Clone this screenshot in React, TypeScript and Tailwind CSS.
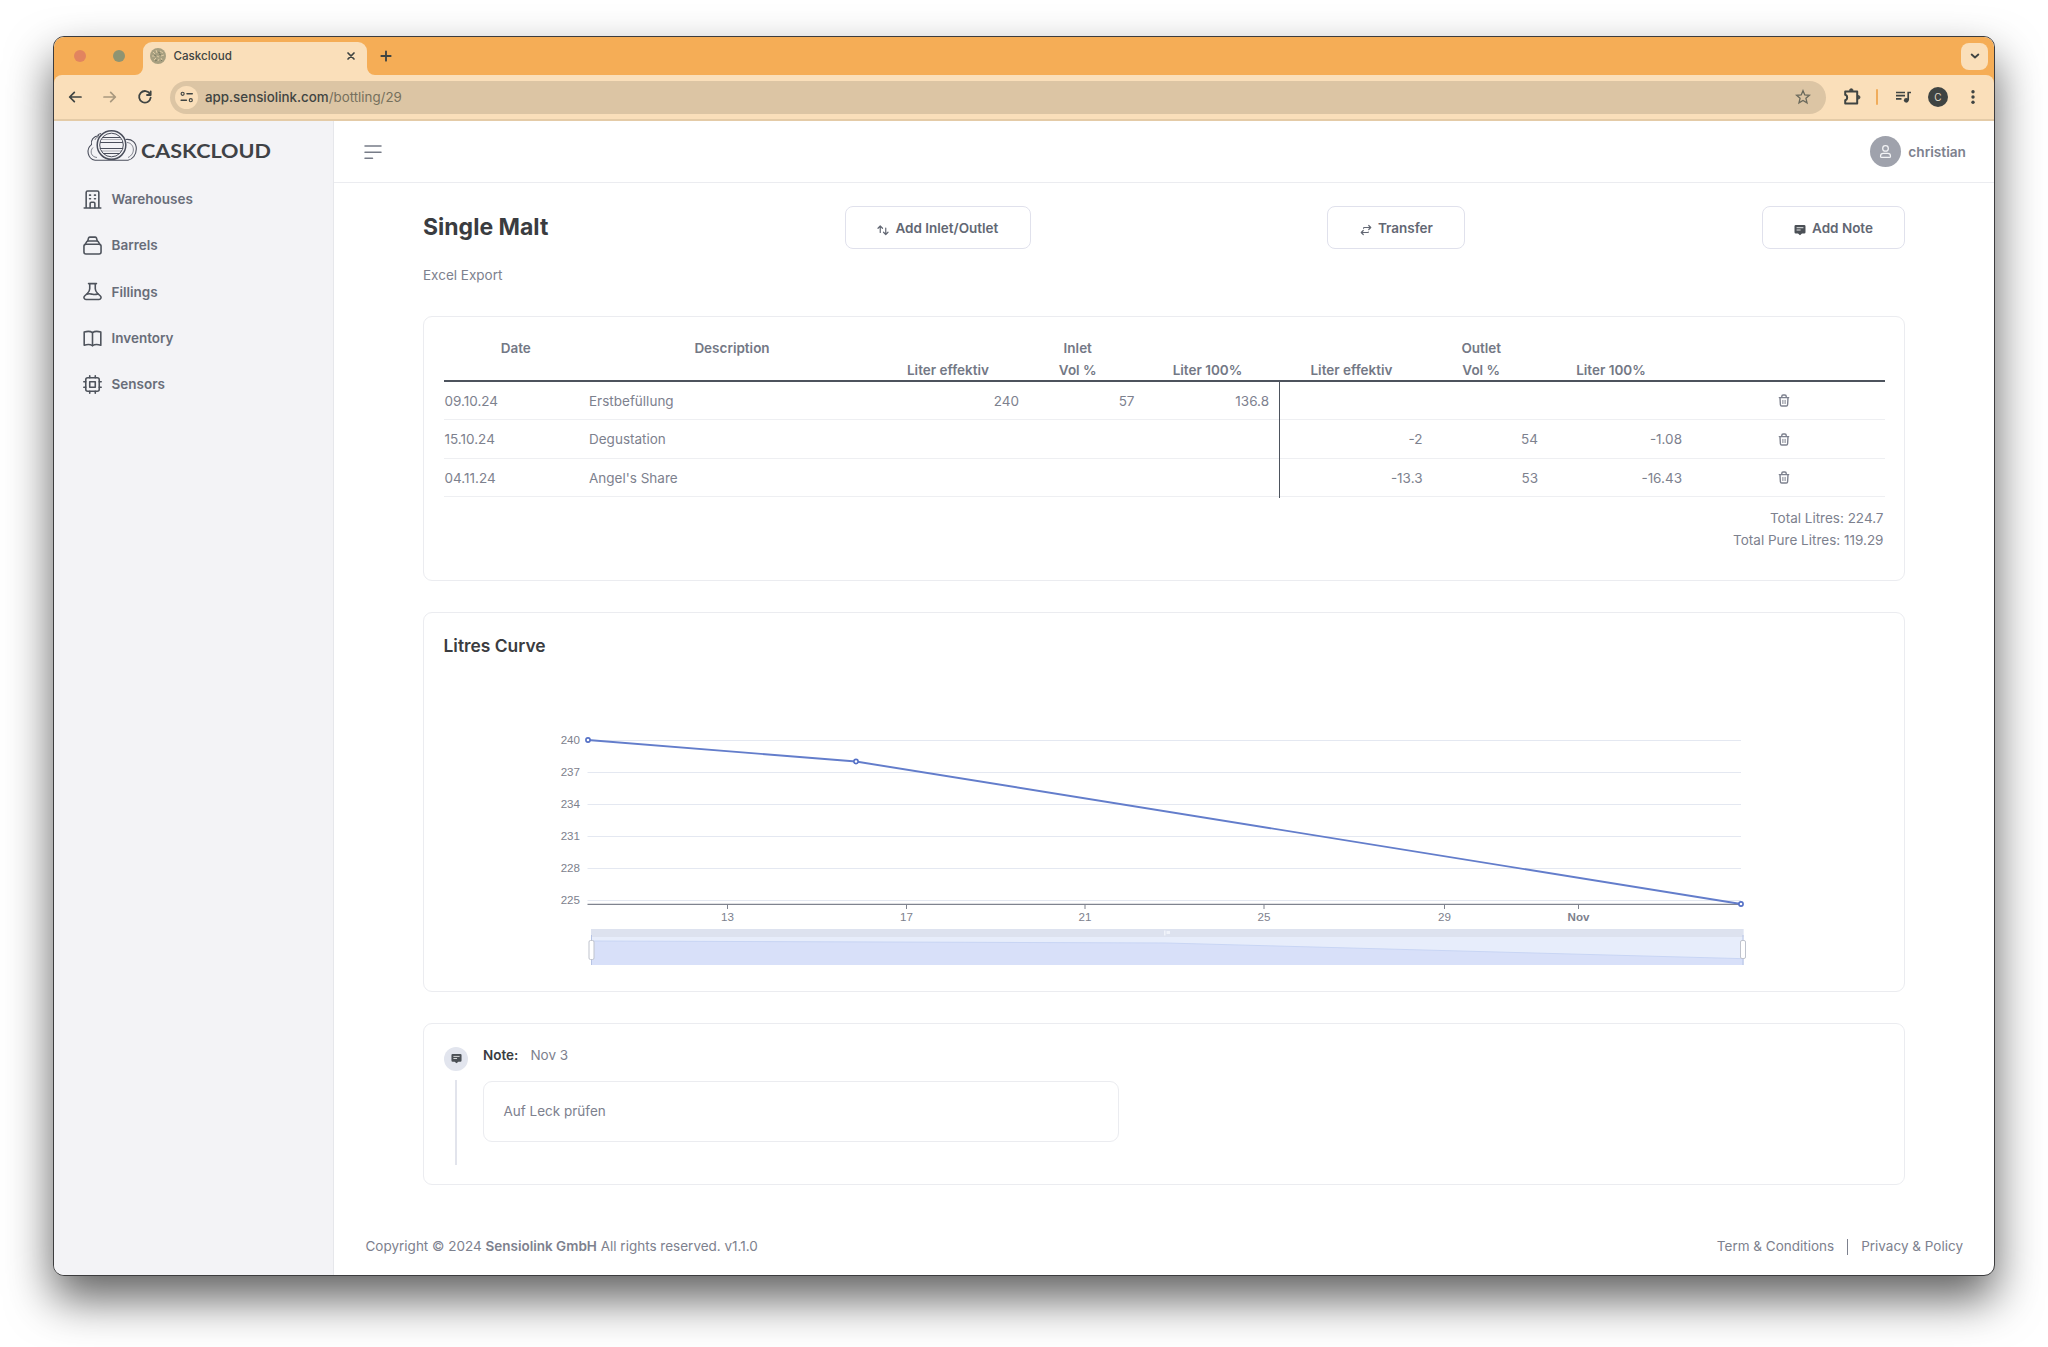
import type { ReactNode } from "react";
import clsx from "clsx";

type IconProps = { className?: string; children?: ReactNode };

function Icon({ className, children }: IconProps) {
    return (
        <svg
            viewBox="0 0 24 24"
            fill="none"
            stroke="currentColor"
            strokeWidth="2"
            strokeLinecap="round"
            strokeLinejoin="round"
            className={className}
        >
            {children}
        </svg>
    );
}

const navItems = [
    {
        label: "Warehouses",
        icon: (
            <>
                <path d="M4 22.5V3a1.8 1.8 0 0 1 1.8-1.8h12.4A1.8 1.8 0 0 1 20 3v19.5M1.5 22.7h21" />
                <path d="M9 22.5V17a1.5 1.5 0 0 1 1.5-1.5h3A1.5 1.5 0 0 1 15 17v5.5" />
                <path d="M8.3 6.5h1.2M14.5 6.5h1.2M8.3 11h1.2M14.5 11h1.2" />
            </>
        ),
    },
    {
        label: "Barrels",
        icon: (
            <>
                <rect x="1.2" y="10.5" width="21.6" height="12.3" rx="2.5" />
                <path d="M2.5 11l2.3-3.8a1.8 1.8 0 0 1 1.6-.9h11.2a1.8 1.8 0 0 1 1.6.9l2.3 3.8" />
                <path d="M6 6.2l1-3.6A1.6 1.6 0 0 1 8.500 1.400h7A1.6 1.6 0 0 1 17 2.600l1 3.600" />
            </>
        ),
    },
    {
        label: "Fillings",
        icon: (
            <>
                <path d="M7 2h10M8.5 2v6.5c0 2.5-1.5 4.5-3 6L2 17.7A2.5 2.5 0 0 0 3.8 22h16.4a2.5 2.5 0 0 0 1.8-4.3l-3.5-3.2c-1.5-1.5-3-3.5-3-6V2" />
                <path d="M4.5 15.5c3-1.200 5-.5 7.500 0s4.500.2 7-.5" />
            </>
        ),
    },
    {
        label: "Inventory",
        icon: (
            <>
                <path d="M12 4.5C9.500 2.800 5 2.800 1.500 3.800v16.700c3.500-1 8-1 10.500.5 2.500-1.500 7-1.500 10.500-.5V3.800C19 2.800 14.500 2.800 12 4.500z" />
                <path d="M12 4.5V21" />
            </>
        ),
    },
    {
        label: "Sensors",
        icon: (
            <>
                <rect x="3.5" y="3.5" width="17" height="17" rx="2.5" />
                <rect x="8.5" y="8.5" width="7" height="7" />
                <path d="M8.5 3.5V1M15.5 3.5V1M8.5 23v-2.5M15.5 23v-2.5M3.5 8.5H1M3.5 15.5H1M23 8.5h-2.500M23 15.5h-2.500" />
            </>
        ),
    },
];

const rows = [
    { date: "09.10.24", text: "Erstbefüllung", inlet: ["240", "57", "136.8"], outlet: ["", "", ""] },
    { date: "15.10.24", text: "Degustation", inlet: ["", "", ""], outlet: ["-2", "54", "-1.08"] },
    { date: "04.11.24", text: "Angel's Share", inlet: ["", "", ""], outlet: ["-13.3", "53", "-16.43"] },
];

function NoteIcon({ className }: { className?: string }) {
    return (
        <svg viewBox="0 0 12 12" className={className}>
            <path
                d="M1.8 1h8.4a1.3 1.3 0 0 1 1.3 1.3v5.9a1.3 1.3 0 0 1-1.3 1.3H8l-2 1.8-2-1.8H1.8A1.3 1.3 0 0 1 .5 8.2V2.3A1.3 1.3 0 0 1 1.8 1z"
                fill="currentColor"
            />
            <path d="M2.6 3.7h6.8M2.6 6h4" stroke="#fff" strokeOpacity="0.85" strokeWidth="1" />
        </svg>
    );
}

function TrashIcon() {
    return (
        <svg
            viewBox="0 0 12 13"
            className="h-[13px] w-3"
            fill="none"
            stroke="#7d818e"
            strokeWidth="1.4"
            strokeLinecap="round"
            strokeLinejoin="round"
        >
            <path d="M1.3 3.6h9.4M3.8 3.4V2.3A1.3 1.3 0 0 1 5.1 1h1.8a1.3 1.3 0 0 1 1.3 1.3v1.100M2 3.8l.4 7A1.3 1.3 0 0 0 3.700 12h4.600a1.3 1.3 0 0 0 1.300-1.200l.4-7" />
            <path d="M4.9 6.3v3.300M7.100 6.300v3.300" strokeWidth="1" />
        </svg>
    );
}

function Logo() {
    return (
        <svg viewBox="0 0 188 36" className="h-9 w-[188px]" fill="none" stroke="#4b4f5c">
            <path
                d="M9 32.2a8.8 8.8 0 0 1-3.5-15.6C4.5 12 7.5 8 13 7.8M39.5 11.5c6.5-1 11 3.500 10.800 9.500-.1 6-3.700 10.200-8.300 11.200H9M11.500 7.500c.8-1 2-1.800 3.500-2"
                strokeWidth="1.1"
            />
            <path d="M7 19.5c-3.5 3.5-2 9.5 4 10M41 14.5c7.5.5 9 11.5 1 15M9 12c.3-1.5 1.3-2.5 2.8-2.8" strokeWidth="0.7" />
            <circle cx="25.5" cy="17" r="14.3" fill="#f3f3f6" strokeWidth="1.5" />
            <circle cx="25.5" cy="17" r="11.8" strokeWidth="1" />
            <path d="M17 9.5h17M14.2 14.5h22.6M13.8 20.5h23.4M17 25.5h17" strokeWidth="1.2" />
            <path d="M15.5 11.5h20M15 23h21" strokeWidth="0.4" />
            <text
                x="55"
                y="29.7"
                textLength="130"
                lengthAdjust="spacingAndGlyphs"
                fill="#3f4246"
                stroke="none"
                className="font-['Lato'] text-[18.5px] font-bold"
            >
                CASKCLOUD
            </text>
        </svg>
    );
}

function TabStrip() {
    return (
        <div className="flex h-[38px] items-end bg-[#f5ad56]">
            <div className="flex h-[38px] w-[89px] items-center gap-[27px] pl-5">
                <span className="h-3 w-3 rounded-full bg-[#e2845f]" />
                <span className="h-3 w-3 rounded-full bg-[#8f9472]" />
            </div>
            <div className="relative flex h-[33px] w-56 items-center rounded-t-[9px] bg-[#fadfba] pb-[5px] pl-[7px] pr-2.5">
                <svg viewBox="0 0 8 8" className="absolute -left-2 bottom-0 h-2 w-2">
                    <path d="M8 0v8H0a8 8 0 0 0 8-8z" fill="#fadfba" />
                </svg>
                <svg viewBox="0 0 8 8" className="absolute -right-2 bottom-0 h-2 w-2">
                    <path d="M0 0v8h8a8 8 0 0 1-8-8z" fill="#fadfba" />
                </svg>
                <svg viewBox="0 0 16 16" className="h-4 w-4">
                    <circle cx="8" cy="8" r="8" fill="#a79f80" />
                    <path
                        d="M3 4l2 2M6 2l1 3M10 3l3 2M2 8h3M7 8l2 1M11 8l3-1M4 12l2-2M8 13l1-2M12 12l-1-2"
                        stroke="#dcc9a3"
                        strokeWidth="1"
                    />
                    <path d="M4 7l2 1M8 4l2 1M9 6l2 1M5 13l2-1M11 13l1-1" stroke="#75765e" strokeWidth="0.9" />
                </svg>
                <span className="ml-[7.5px] flex-1 pt-px text-[11.6px] font-medium text-[#3f4442]">Caskcloud</span>
                <Icon className="h-3 w-3 text-[#3f4442]">
                    <path d="M6 6l12 12M18 6L6 18" strokeWidth="3.4" />
                </Icon>
            </div>
            <div className="flex h-[38px] flex-1 items-center justify-between pl-3 pr-1.5">
                <Icon className="h-3.5 w-3.5 text-[#3f4442]">
                    <path d="M12 4v16M4 12h16" strokeWidth="3.2" />
                </Icon>
                <div className="flex h-[27px] w-[27px] items-center justify-center rounded-lg bg-[#fadfba]">
                    <Icon className="h-2.5 w-2.5 text-[#3f4442]">
                        <path d="M4 8.5l8 7 8-7" strokeWidth="4.5" />
                    </Icon>
                </div>
            </div>
        </div>
    );
}

function Toolbar() {
    return (
        <div className="bg-[#f5ad56]">
            <div className="flex h-[46px] items-center rounded-t-lg border-b-2 border-[#e4cba7] bg-[#fadfba] text-[#3f4442]">
                <Icon className="ml-[13px] h-4 w-4">
                    <path d="M4 12h17M11 5l-7 7 7 7" strokeWidth="2.6" />
                </Icon>
                <Icon className="ml-[19px] h-4 w-4 text-[#a9997f]">
                    <path d="M3 12h17M13 5l7 7-7 7" strokeWidth="2.6" />
                </Icon>
                <Icon className="ml-[19px] h-4 w-4">
                    <path d="M19.5 7.5A8.7 8.7 0 1 0 20.5 13M20.5 3.5V9H15" strokeWidth="2.7" />
                </Icon>
                <div className="ml-[17px] flex h-[33px] w-[1656px] items-center rounded-full bg-[#dcc5a4] pl-[5px] pr-[15px]">
                    <div className="flex h-[23px] w-[23px] items-center justify-center rounded-full bg-[#fadfba]">
                        <Icon className="h-[14px] w-[14px]">
                            <circle cx="4.5" cy="6.5" r="2.6" />
                            <path d="M12 6.5h9M2 17.5h9" strokeWidth="2.6" />
                            <circle cx="18.5" cy="17.5" r="2.6" />
                        </Icon>
                    </div>
                    <p className="ml-[7px] flex-1 pt-px text-[13.35px] font-medium">
                        app.sensiolink.com<span className="font-normal text-[#76705c]">/bottling/29</span>
                    </p>
                    <Icon className="h-4 w-4 text-[#6b6a5c]">
                        <path
                            d="M12 2.5l2.7 6.4 6.9.6-5.200 4.500 1.600 6.800-6-3.600-6 3.600 1.600-6.800L2.400 9.500l6.900-.6z"
                            strokeLinejoin="miter"
                        />
                    </Icon>
                </div>
                <svg viewBox="0 0 18 18" className="ml-[17px] h-[18px] w-[18px]" fill="none" stroke="currentColor">
                    <path d="M2.2 3.5h12v12h-12v-3.3c2.6-.6 2.6-4.8 0-5.4z" strokeWidth="2" strokeLinejoin="round" />
                    <path
                        d="M6.5 2.5a1.8 1.8 0 0 1 3.6 0zM15.2 7.5a1.8 1.8 0 0 1 0 3.6z"
                        fill="currentColor"
                        strokeWidth="0.8"
                    />
                </svg>
                <div className="ml-[15px] h-4 w-0.5 rounded-full bg-[#f0ac5b]" />
                <svg viewBox="0 0 18 14" className="ml-[17px] h-[14px] w-[18px]" fill="none" stroke="currentColor">
                    <path d="M1 2.5h9M1 5.7h9M1 8.9h5.5M13.2 10V2.5H16" strokeWidth="1.7" />
                    <circle cx="11.3" cy="10.3" r="2.4" fill="currentColor" stroke="none" />
                </svg>
                <div className="ml-[15px] flex h-5 w-5 items-center justify-center rounded-full bg-[#3f4442] text-[10px] text-[#e6dccb]">
                    C
                </div>
                <svg viewBox="0 0 4 16" className="ml-[23px] h-4 w-1" fill="currentColor">
                    <circle cx="2" cy="2.7" r="1.7" />
                    <circle cx="2" cy="8" r="1.7" />
                    <circle cx="2" cy="13.3" r="1.7" />
                </svg>
            </div>
        </div>
    );
}

function Sidebar() {
    return (
        <aside className="w-[280px] border-r border-[#e6e7eb] bg-[#f3f3f6]">
            <div className="pl-[31.5px] pt-[7px]">
                <Logo />
            </div>
            <nav className="mt-3 flex flex-col pl-[29px]">
                {navItems.map((item) => (
                    <a key={item.label} className="flex h-[46.3px] items-center gap-[9.5px]">
                        <Icon className="h-[19px] w-[19px] text-[#4e535c]">{item.icon}</Icon>
                        <span className="text-[13.5px] font-semibold text-[#686d79]">{item.label}</span>
                    </a>
                ))}
            </nav>
        </aside>
    );
}

function ActionButton({ className, icon, children }: { className: string; icon: ReactNode; children: ReactNode }) {
    return (
        <button
            className={clsx(
                "flex h-[43px] items-center justify-center gap-1.5 rounded-[8px] border border-[#e0e1ec] pt-0.5 text-[13.5px] font-semibold text-[#626773]",
                className
            )}
        >
            {icon}
            {children}
        </button>
    );
}

const GRID = "grid grid-cols-[144.5px_288px_144px_115.5px_144px_144px_115.5px_144px_201.5px]";

function BottlingTable() {
    return (
        <section className="h-[265px] rounded-[9px] border border-[#ebecf0] px-[19.5px] pt-5">
            <div
                className={clsx(
                    GRID,
                    "h-[45px] border-b-2 border-[#4d535d] text-center font-semibold leading-[22px] text-[#737885]"
                )}
            >
                <span>Date</span>
                <span>Description</span>
                <span className="col-span-3">Inlet</span>
                <span className="col-span-3">Outlet</span>
                <span />
                <span className="col-start-3">Liter effektiv</span>
                <span>Vol %</span>
                <span>Liter 100%</span>
                <span>Liter effektiv</span>
                <span>Vol %</span>
                <span>Liter 100%</span>
            </div>
            {rows.map((row) => (
                <div key={row.date} className={clsx(GRID, "h-[38.5px] border-b border-[#eeeff2] leading-[38px]")}>
                    <span className="pl-px">{row.date}</span>
                    <span className="pl-px">{row.text}</span>
                    <span className="pr-px text-right">{row.inlet[0]}</span>
                    <span className="pr-px text-right">{row.inlet[1]}</span>
                    <span className="-mb-px border-r border-[#4d535d] pr-[9.5px] text-right">{row.inlet[2]}</span>
                    <span className="pr-px text-right">{row.outlet[0]}</span>
                    <span className="pr-px text-right">{row.outlet[1]}</span>
                    <span className="pr-px text-right">{row.outlet[2]}</span>
                    <span className="flex items-center justify-center">
                        <TrashIcon />
                    </span>
                </div>
            ))}
            <div className="mt-2.5 pr-px text-right leading-[22px]">
                <p>Total Litres: 224.7</p>
                <p>Total Pure Litres: 119.29</p>
            </div>
        </section>
    );
}

const yTicks = [
    { label: "240", y: 740.5 },
    { label: "237", y: 772.5 },
    { label: "234", y: 804.5 },
    { label: "231", y: 836.5 },
    { label: "228", y: 868.5 },
    { label: "225", y: 900.5 },
];

const xTicks = [
    { label: "13", x: 727.5 },
    { label: "17", x: 906.5 },
    { label: "21", x: 1085 },
    { label: "25", x: 1264 },
    { label: "29", x: 1444.5 },
    { label: "Nov", x: 1578.5, bold: true },
];

const points = [
    [588, 740],
    [856, 761.5],
    [1741, 904],
];

function LitresChart() {
    return (
        <svg viewBox="540 720 1220 255" className="ml-[115.5px] mt-[62px] h-[255px] w-[1220px] font-['Liberation_Sans']">
            {yTicks.map((tick) => (
                <g key={tick.label}>
                    <path d={`M587.5 ${tick.y}H1741`} stroke="#e4e8f1" />
                    <text x="580" y={tick.y + 3.5} textAnchor="end" className="fill-[#7d818d] text-[11.6px]">
                        {tick.label}
                    </text>
                </g>
            ))}
            <path d="M587.5 904.3H1741" stroke="#80848f" strokeWidth="1.3" />
            {xTicks.map((tick) => (
                <g key={tick.label}>
                    <path d={`M${tick.x} 904v5`} stroke="#80848f" />
                    <text
                        x={tick.x}
                        y="921"
                        textAnchor="middle"
                        className={clsx("fill-[#7d818d] text-[11.6px]", tick.bold && "font-bold")}
                    >
                        {tick.label}
                    </text>
                </g>
            ))}
            <polyline points={points.join(" ")} fill="none" stroke="#637dcb" strokeWidth="1.9" />
            {points.map(([x, y]) => (
                <circle key={x} cx={x} cy={y} r="2.1" fill="#fff" stroke="#5470c6" strokeWidth="1.6" />
            ))}
            {/* range slider */}
            <rect x="591" y="929" width="1152.5" height="36" fill="#e7edfb" />
            <rect x="591" y="929" width="1152.5" height="8" fill="#dde2ef" />
            <path d="M591 941L1166 943L1743.5 958.7V965H591z" fill="#d8e0f9" />
            <path d="M591 941L1166 943L1743.5 958.7" fill="none" stroke="#c8d5f4" />
            <path d="M1164 930.5h1.5v5h-1.5zM1166.5 931h3.5v3h-3.5z" fill="#f0f3fa" />
            <path d="M591.5 935v30M1743 935v30" stroke="#b7c4e4" />
            <rect x="589" y="940.5" width="5" height="19" rx="1.5" fill="#fff" stroke="#bfc3cd" />
            <rect x="1740.5" y="940.5" width="5" height="18" rx="1.5" fill="#fff" stroke="#bfc3cd" />
        </svg>
    );
}

function NoteTimeline() {
    return (
        <section className="mt-[31px] flex h-[162px] rounded-[9px] border border-[#ebecf0] pl-5">
            <div className="flex w-6 flex-col items-center pt-[23px]">
                <div className="flex h-6 w-6 items-center justify-center rounded-full bg-[#e2e5ee]">
                    <NoteIcon className="h-[11px] w-[11px] text-[#4b5056]" />
                </div>
                <div className="mt-[9px] h-[85px] w-0.5 bg-[#e2e4ec]" />
            </div>
            <div className="ml-[15px] pt-5">
                <p className="leading-[22px]">
                    <span className="mr-3 font-semibold text-[#3a3d42]">Note:</span>
                    Nov 3
                </p>
                <div className="mt-[15px] flex h-[61px] w-[636px] items-center rounded-[9px] border border-[#ebecf0] pl-[19.5px]">
                    Auf Leck prüfen
                </div>
            </div>
        </section>
    );
}

export default function App() {
    return (
        <div className="h-[1347px] w-[2048px] overflow-hidden bg-white px-[53px] pt-9 font-['Inter',sans-serif] text-[13.5px] text-[#7d818e]">
            <div className="flex h-[1240px] w-[1942px] flex-col overflow-hidden rounded-[11px] border border-[#3c3c3e] bg-white shadow-[0_23px_46px_rgba(0,0,0,0.62)]">
                <TabStrip />
                <Toolbar />
                <div className="flex flex-1">
                    <Sidebar />
                    <div className="flex flex-1 flex-col">
                        <header className="flex h-[62px] items-center justify-between border-b border-[#ebecf0] pl-[30px] pr-[28px]">
                            <svg
                                viewBox="0 0 18 16"
                                className="h-4 w-[18px]"
                                stroke="#777c88"
                                strokeWidth="1.5"
                                strokeLinecap="round"
                            >
                                <path d="M1 2h16M1 8.2h16M1 14.3h7.5" />
                            </svg>
                            <div className="flex items-center gap-[7px]">
                                <div className="flex h-[31px] w-[31px] items-center justify-center rounded-full bg-[#9fa2ac] text-[#f3f4f6]">
                                    <Icon className="h-[15px] w-[15px]">
                                        <circle cx="12" cy="7" r="4.5" />
                                        <path d="M4 19.5c0-3 2-4.5 4.5-4.5h7c2.5 0 4.500 1.500 4.500 4.500 0 1-.8 2-2 2H6c-1.200 0-2-1-2-2z" />
                                    </Icon>
                                </div>
                                <span className="pt-0.5 text-[13.7px] font-semibold">christian</span>
                            </div>
                        </header>
                        <main className="pl-[89px] pt-[23px]">
                            <div className="w-[1482px]">
                                <div className="flex items-center justify-between">
                                    <h1 className="text-[23px] font-bold text-[#3a3c40]">Single Malt</h1>
                                    <ActionButton
                                        className="w-[186px]"
                                        icon={
                                            <Icon className="mt-0.5 h-3 w-3">
                                                <path
                                                    d="M6.5 17V4M2 8.5L6.5 4 11 8.5M17.5 8v13M13 16.5l4.5 4.5 4.5-4.5"
                                                    strokeWidth="2.4"
                                                />
                                            </Icon>
                                        }
                                    >
                                        Add Inlet/Outlet
                                    </ActionButton>
                                    <ActionButton
                                        className="w-[138px]"
                                        icon={
                                            <Icon className="mt-0.5 h-3 w-3">
                                                <path
                                                    d="M7 8.5C7 7.5 7.5 7 9 7h12M17.5 3l4 4-4 4M17 16c0 .7-.5 1-2 1H3M6.5 13l-4 4 4 4"
                                                    strokeWidth="2.4"
                                                />
                                            </Icon>
                                        }
                                    >
                                        Transfer
                                    </ActionButton>
                                    <ActionButton
                                        className="w-[143px]"
                                        icon={<NoteIcon className="mt-0.5 h-3 w-3 text-[#4b5056]" />}
                                    >
                                        Add Note
                                    </ActionButton>
                                </div>
                                <p className="mb-[30px] mt-[14.5px] leading-[22px]">Excel Export</p>
                                <BottlingTable />
                                <section className="mt-[31px] h-[380px] rounded-[9px] border border-[#ebecf0] pt-[21px]">
                                    <h2 className="pl-[19.5px] text-[17.4px] font-semibold leading-6 text-[#3a3c40]">
                                        Litres Curve
                                    </h2>
                                    <LitresChart />
                                </section>
                                <NoteTimeline />
                            </div>
                        </main>
                        <footer className="mt-auto flex h-[57px] items-center justify-between pl-[31.5px] pr-[31px]">
                            <p>
                                Copyright © 2024 <span className="font-semibold">Sensiolink GmbH</span> All rights
                                reserved. v1.1.0
                            </p>
                            <div className="flex items-center gap-[13px]">
                                <span>Term &amp; Conditions</span>
                                <span className="h-4 w-px bg-[#7d818e]" />
                                <span>Privacy &amp; Policy</span>
                            </div>
                        </footer>
                    </div>
                </div>
            </div>
        </div>
    );
}
